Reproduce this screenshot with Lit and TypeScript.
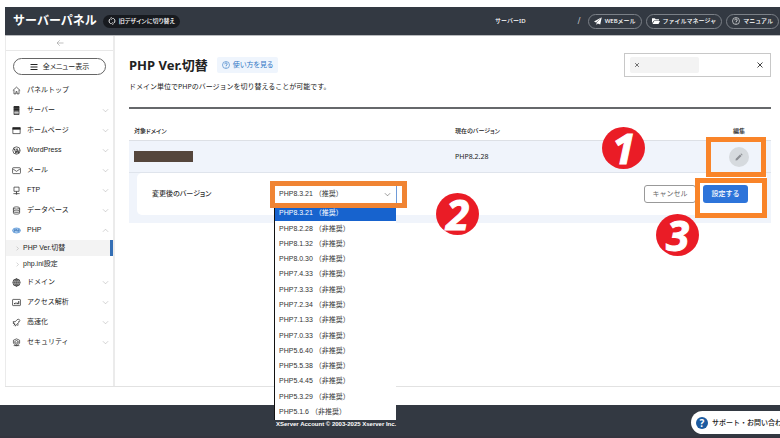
import { LitElement, html, css, svg, nothing } from "lit";
import { customElement, state } from "lit/decorators.js";
import { classMap } from "lit/directives/class-map.js";

const paths: Record<string, unknown> = {
  home: svg`<path d="M1.500 8 8 2l6.500 6M3.500 7v7h3.500v-4h2v4h3.500V7"/>`,
  server: svg`<path d="M3.500 .8h9v14.400h-9z" fill="#888"/><path d="M4 1h8v3H4zM4 5.500h8v2H4z" fill="#333"/><path d="M4 12h8" stroke="#fff"/>`,
  page: svg`<path d="M1.500 3h13v10.500h-13z"/><path d="M1 2.500h14v4H1z" fill="#222" stroke="none"/>`,
  wordpress: svg`<circle cx="8" cy="8" r="6.500"/><path d="M3 5.500h3M4.500 5.500 7 13l1.500-5M7.500 5.500h3M8.500 5.500 11 12.500l2-6" stroke-width="1.500"/>`,
  mail: svg`<rect x="1" y="3" width="14" height="10.500" rx="1.500"/><path d="m2 5.500 6 4 6-4"/>`,
  ftp: svg`<path d="M3.500 2h9v7.500h-9zM8 9.500V13M2.500 13.500h4M9.500 13.500h4M7 12.500h2v2H7z"/>`,
  database: svg`<ellipse cx="8" cy="3.500" rx="5.500" ry="2"/><path d="M2.500 3.500v9c0 2.700 11 2.700 11 0v-9M2.500 6.500c0 2.700 11 2.700 11 0M2.500 9.500c0 2.700 11 2.700 11 0"/>`,
  php: svg`<ellipse cx="8" cy="8" rx="7" ry="4.500" fill="#b9d5f3" stroke="#3f86cf"/><path d="M4 10.500V6.500h1.500c1.500 0 1.500 2 0 2H4M7.500 5v4.500M7.500 7c2-1 2 0 2 2.500M11 10.500V6.500h1c1.500 0 1.500 2 0 2h-1" stroke="#2d6db5"/>`,
  domain: svg`<circle cx="8" cy="8" r="6.500" fill="#e4e4e4"/><ellipse cx="8" cy="8" rx="3" ry="6.500"/><path d="M1.500 8h13M2.500 5h11M2.500 11h11M8 1.500v13" stroke-width=".8"/>`,
  chart: svg`<rect x="1" y="2.500" width="14" height="11" rx="1"/><path d="M4.500 11V9M7 11V8M9.500 11V8.500M12 11V5.500" stroke-width="1.700"/>`,
  speed: svg`<path d="M2 6.500h4l3-3.500 3-1 2 2-2 4-4 3.500-2 3-1-3.500-2-1.500zM1.500 9.500h3M3 13l2.500-2.500M10 14l1-4M11 5.500l1 1"/>`,
  security: svg`<path d="M8 1.500 13.500 4v5L8 14.500 2.500 9V4z"/><path d="M8 4.500 11 6v3l-3 3-3-3V6zM6.500 8 8 9.500 10 6.500"/><path d="M3 13.500h10"/>`,
  down: svg`<path d="m2 5 6 6 6-6"/>`,
  up: svg`<path d="m2 11 6-6 6 6"/>`,
  right: svg`<path d="m5 2 6 6-6 6"/>`,
  back: svg`<path d="M15 8H2M7.500 2.500 2 8l5.500 5.500"/>`,
  bars: svg`<path d="M1 3h14M1 8h14M1 13h14" stroke-width="2"/>`,
  swap: svg`<path d="M5.500 13.500A6 6 0 0 1 5 3M10.500 2.500A6 6 0 0 1 11 13M6 .5 8.500 3 6 5.500M10 10.500 7.500 13l2.500 2.500" stroke-width="1.800"/>`,
  plane: svg`<path d="M15.500.5 0 9l4 2zM15.500.5 5 11.500V16l2.500-3 5 2z" fill="currentColor" stroke="none"/>`,
  folder: svg`<path d="M0 12V2.500h5.500l2 2H14V7H4z" fill="currentColor" stroke="none"/><path d="M4.500 8H16l-3 6H1z" fill="currentColor" stroke="none"/>`,
  question: svg`<circle cx="8" cy="8" r="7"/><path d="M5.500 6.500c0-3.500 5-3 5-.3C10.500 8 8 8 8 10M8 11.500v1.500" stroke-width="1.600"/>`,
  cross: svg`<path d="m3 3 10 10M13 3 3 13" stroke-width="2"/>`,
  pencil: svg`<path d="m1 15 .5-3.500L10 3l3 3-8.500 8.500zM11 2l1-1c.8-.8 3.800 2.200 3 3l-1 1z" fill="currentColor" stroke="none"/>`,
};

const icon = (name: string) => html`<svg class="icon" viewBox="0 0 16 16" aria-hidden="true">${paths[name]}</svg>`;

interface Item { name: string; icon: string; leaf?: boolean; children?: string[]; }

const menu: Item[] = [
  { name: "パネルトップ", icon: "home", leaf: true },
  { name: "サーバー", icon: "server" },
  { name: "ホームページ", icon: "page" },
  { name: "WordPress", icon: "wordpress" },
  { name: "メール", icon: "mail" },
  { name: "FTP", icon: "ftp" },
  { name: "データベース", icon: "database" },
  { name: "PHP", icon: "php", children: ["PHP Ver.切替", "php.ini設定"] },
  { name: "ドメイン", icon: "domain" },
  { name: "アクセス解析", icon: "chart" },
  { name: "高速化", icon: "speed" },
  { name: "セキュリティ", icon: "security" },
];

const versions = [
  "8.3.21", "8.2.28", "8.1.32", "8.0.30", "7.4.33", "7.3.33", "7.2.34",
  "7.1.33", "7.0.33", "5.6.40", "5.5.38", "5.4.45", "5.3.29", "5.1.6",
].map((v, i) => `PHP${v} （${i === 0 ? "" : "非"}推奨）`);

const shared = css`
  * { box-sizing: border-box; }
  button, select, input { font: inherit; color: inherit; margin: 0; padding: 0; border: 0; background: none; }
  a { color: inherit; text-decoration: none; }
  ul { list-style: none; margin: 0; padding: 0; }
  .icon { width: 8px; height: 8px; flex: none; fill: none; stroke: currentColor; stroke-width: 1.2; }
`;

@customElement("panel-header")
class PanelHeader extends LitElement {
  static styles = [shared, css`
    :host { display: flex; align-items: center; height: 28px; margin-left: 5px; padding: 0 1px 0 8px;
      background: #333942; color: #fff; font-size: 6px; font-weight: 500; }
    .brand { font-size: 12px; font-weight: 700; }
    .pill { display: flex; align-items: center; gap: 3px; height: 15px; padding: 0 5px; white-space: nowrap;
      border: 1px solid #7b8087; border-radius: 8px; }
    .pill.dark { height: 13px; margin-left: 6px; border: 0; background: #171a1f; font-feature-settings: "palt"; }
    .user { margin-left: auto; }
    .slash { margin: 0 7px 0 52px; color: #b5b8bc; font-size: 8px; }
    .links { display: flex; gap: 4px; }
  `];
  render() {
    return html`
      <div class="brand">サーバーパネル</div>
      <button class="pill dark">${icon("swap")}旧デザインに切り替え</button>
      <span class="user">サーバーID</span><span class="slash">/</span>
      <nav class="links">
        <a class="pill" href="#mail">${icon("plane")}WEBメール</a>
        <a class="pill" href="#files">${icon("folder")}ファイルマネージャ</a>
        <a class="pill" href="#manual">${icon("question")}マニュアル</a>
      </nav>`;
  }
}

@customElement("side-menu")
class SideMenu extends LitElement {
  static styles = [shared, css`
    :host { display: block; width: 110px; flex: none; padding-bottom: 34px; border: solid #ebebeb; border-width: 0 2px 0 1px; font-size: 7px; color: #222; }
    .collapse { display: flex; width: 100%; height: 15px; align-items: center; justify-content: center; border-bottom: 1px solid #e8e8e8; color: #999; }
    .all { display: flex; align-items: center; justify-content: center; gap: 5px; width: 93px; height: 17px;
      margin: 7px 0 5px 7px; border: 1px solid #666; border-radius: 9px; font-feature-settings: "palt"; }
    .row { display: flex; align-items: center; gap: 6px; height: 20px; padding: 0 4px 0 6px; }
    .row .icon { width: 9px; height: 9px; }
    .row .mark { width: 7px; height: 7px; margin-left: auto; display: flex; color: #aaa; }
    .row .mark .icon { width: 7px; height: 7px; }
    .sub { display: flex; align-items: center; gap: 3px; height: 16px; padding-left: 9px; }
    .sub .icon { width: 5px; height: 5px; color: #888; }
    .sub.current { background: #f3f3f3; border-right: 3px solid #346fb5; }
  `];
  render() {
    return html`
      <button class="collapse" aria-label="メニューを閉じる">${icon("back")}</button>
      <button class="all">${icon("bars")}全メニュー表示</button>
      <nav><ul>${menu.map(m => html`
        <li>
          <a class="row" href="#${m.icon}">${icon(m.icon)}${m.name}${m.leaf ? nothing : html`<span class="mark">${icon(m.children ? "up" : "down")}</span>`}</a>
          ${m.children ? html`<ul>${m.children.map((c, i) => html`
            <li><a class=${classMap({ sub: true, current: i === 0 })} href="#php-${i}">${icon("right")}${c}</a></li>`)}</ul>` : nothing}
        </li>`)}</ul></nav>`;
  }
}

@customElement("version-picker")
class VersionPicker extends LitElement {
  @state() private chosen = 0;
  static styles = [shared, css`
    :host { display: flex; align-items: center; font-size: 7px; color: #333; }
    label { width: 123px; font-weight: 500; font-feature-settings: "palt"; }
    .box { position: relative; display: flex; align-items: center; }
    select { appearance: none; width: 122px; height: 17px; padding-left: 4px; border-right: 1px solid #6f9bd8; background: #fff; outline: 0; }
    .arrow { position: absolute; right: 6px; display: flex; pointer-events: none; color: #444; }
    .arrow .icon { width: 7px; height: 7px; }
    .frame { position: absolute; z-index: 3; top: -5px; left: -5px; width: 137px; height: 27px; border: 5px solid #f08433; pointer-events: none; }
    .list { position: absolute; z-index: 2; top: 20px; left: -1px; width: 122px; height: 214px; display: grid; grid-auto-rows: 1fr;
      background: #fff; border-left: 1px solid #111; }
    .option { display: flex; align-items: center; padding-left: 4px; white-space: pre; }
    .option.on { background: #1763ce; color: #fff; }
  `];
  render() {
    return html`
      <label for="version">変更後のバージョン</label>
      <div class="box">
        <select id="version" @change=${(e: Event) => (this.chosen = (e.target as HTMLSelectElement).selectedIndex)}>
          ${versions.map((v, i) => html`<option ?selected=${i === this.chosen}>${v}</option>`)}
        </select>
        <span class="arrow">${icon("down")}</span>
        <ul class="list" role="listbox" aria-label="変更後のバージョン">
          ${versions.map((v, i) => html`<li role="option" aria-selected=${i === this.chosen ? "true" : "false"}
            class=${classMap({ option: true, on: i === this.chosen })} @click=${() => (this.chosen = i)}>${v}</li>`)}
        </ul>
        <span class="frame"></span>
      </div>`;
  }
}

@customElement("app-root")
class AppRoot extends LitElement {
  static styles = [shared, css`
    :host { display: flex; flex-direction: column; min-height: 100vh; padding-top: 7px; overflow: hidden; position: relative; box-sizing: border-box;
      background: #fff; color: #222; font: 7px/1.4 "Liberation Sans", "Noto Sans CJK JP", sans-serif; }
    panel-header, main { font-family: "Noto Sans", "Noto Sans CJK JP", sans-serif; }
    version-picker { font-family: "Liberation Sans", "Noto Sans CJK JP", sans-serif; }
    .shell { display: flex; margin-left: 5px; border: solid #e2e2e2; border-width: 1px 0; border-top-color: #b9bbbe; }
    main { position: relative; flex: 1; min-width: 0; padding: 16px 9px 0 14px; }
    .head { display: flex; align-items: center; height: 25px; }
    h1 { margin: 0; font-size: 13px; line-height: 24px; font-weight: 700; white-space: nowrap; }
    .help { display: flex; align-items: center; gap: 3px; height: 16px; margin-left: 9px; padding: 0 5px 0 5px; background: #eff5fd; color: #3478c5; border-radius: 2px; white-space: nowrap; font-feature-settings: "palt"; }
    .filter { display: flex; align-items: center; width: 147px; height: 24px; margin-left: auto; padding: 0 6px 0 5px; border: 1px solid #c8c8c8; color: #444; }
    .tag { display: flex; align-items: center; width: 69px; height: 16px; padding-left: 4px; background: #f3f3f3; border-radius: 2px; }
    .tag .icon { width: 6px; height: 6px; }
    .tag input { width: 50px; outline: 0; }
    .clear { display: flex; margin-left: auto; }
    .lead { margin: 0; height: 30px; padding-top: 4px; line-height: 12px; }
    table { width: 100%; table-layout: fixed; border-collapse: separate; border-spacing: 0; border-top: 2px solid #66686b; }
    th { height: 32px; padding: 13px 5px 0; font-size: 6px; font-weight: 500; text-align: left; border-bottom: 1px solid #dde0e5; font-feature-settings: "palt"; }
    td { background: #f0f4fb; padding: 0 5px; }
    .now td { height: 32px; border-bottom: 1px solid #dfe4ec; }
    .c-domain { width: 50%; }
    .c-edit { width: 10%; }
    th.c-edit, td.c-edit { text-align: center; padding-left: 0; padding-right: 0; }
    .redacted { display: block; width: 59px; height: 11px; background: #55463c; }
    .spot { position: relative; display: inline-flex; }
    .edit { display: flex; align-items: center; justify-content: center; width: 20px; height: 20px; border-radius: 50%; background: #d6dade; color: #8c8f94; }
    .frame { position: absolute; z-index: 1; height: 40px; border: 5px solid #f98429; pointer-events: none; }
    .edit-frame { top: -10px; left: -23px; width: 60px; }
    .save-frame { top: -7px; left: -8px; width: 72px; }
    .form td { padding: 0 4px 8px 8px; }
    .panel { display: flex; align-items: center; gap: 7px; height: 42px; padding: 0 19px 0 15px; background: #fff; border-radius: 5px; }
    .btn { height: 18px; border-radius: 3px; white-space: nowrap; }
    .cancel { width: 52px; margin-left: auto; border: 1px solid #999; color: #666; }
    .save { width: 45px; background: #2d74da; color: #fff; font-weight: 500; }
    .badge { position: absolute; z-index: 4; display: flex; align-items: center; justify-content: center; width: 43px; height: 42px; border-radius: 50%;
      background: #ea1c26; color: #fff; font: italic 700 42px/42px "Open Sans", sans-serif; -webkit-text-stroke: 1px #fff; }
    .one { top: 91px; left: 487px; }
    .two { top: 157px; left: 321px; }
    .three { top: 178px; left: 541px; }
    footer { position: relative; flex: 1; min-height: 33px; margin-top: 18px; padding: 15px 0 0 276px; background: #333942; border-bottom: 2px solid #34353f; color: #fff; font-size: 6px; font-weight: 700; overflow: hidden; }
    .support { position: absolute; top: 6px; right: -20px; display: flex; align-items: center; gap: 4px; width: 109px; height: 23px; padding-left: 5px;
      border-radius: 12px; background: #fff; color: #222; font-size: 7px; font-weight: 500; white-space: nowrap; }
    .q { display: flex; align-items: center; justify-content: center; width: 12px; height: 12px; border-radius: 50%; background: #1c5ba0; color: #fff; font: 700 10px/12px "Noto Sans", sans-serif; }
  `];
  render() {
    return html`
      <panel-header></panel-header>
      <div class="shell">
        <side-menu></side-menu>
        <main>
          <div class="head">
            <h1>PHP Ver.切替</h1>
            <a class="help" href="#help">${icon("question")}使い方を見る</a>
            <div class="filter">
              <div class="tag">${icon("cross")}<input type="text" aria-label="ドメイン" /></div>
              <button class="clear" aria-label="クリア">${icon("cross")}</button>
            </div>
          </div>
          <p class="lead">ドメイン単位でPHPのバージョンを切り替えることが可能です。</p>
          <table>
            <thead><tr><th class="c-domain">対象ドメイン</th><th>現在のバージョン</th><th class="c-edit">編集</th></tr></thead>
            <tbody>
              <tr class="now">
                <td><span class="redacted"></span></td>
                <td>PHP8.2.28</td>
                <td class="c-edit"><span class="spot"><button class="edit" aria-label="編集">${icon("pencil")}</button><span class="frame edit-frame"></span></span></td>
              </tr>
              <tr class="form"><td colspan="3"><div class="panel">
                <version-picker></version-picker>
                <button class="btn cancel">キャンセル</button>
                <span class="spot"><button class="btn save">設定する</button><span class="frame save-frame"></span></span>
              </div></td></tr>
            </tbody>
          </table>
          <span class="badge one">1</span>
          <span class="badge two">2</span>
          <span class="badge three">3</span>
        </main>
      </div>
      <footer>
        <span>XServer Account © 2003-2025 Xserver Inc.</span>
        <a class="support" href="#support"><span class="q">?</span>サポート・お問い合わせ</a>
      </footer>`;
  }
}
